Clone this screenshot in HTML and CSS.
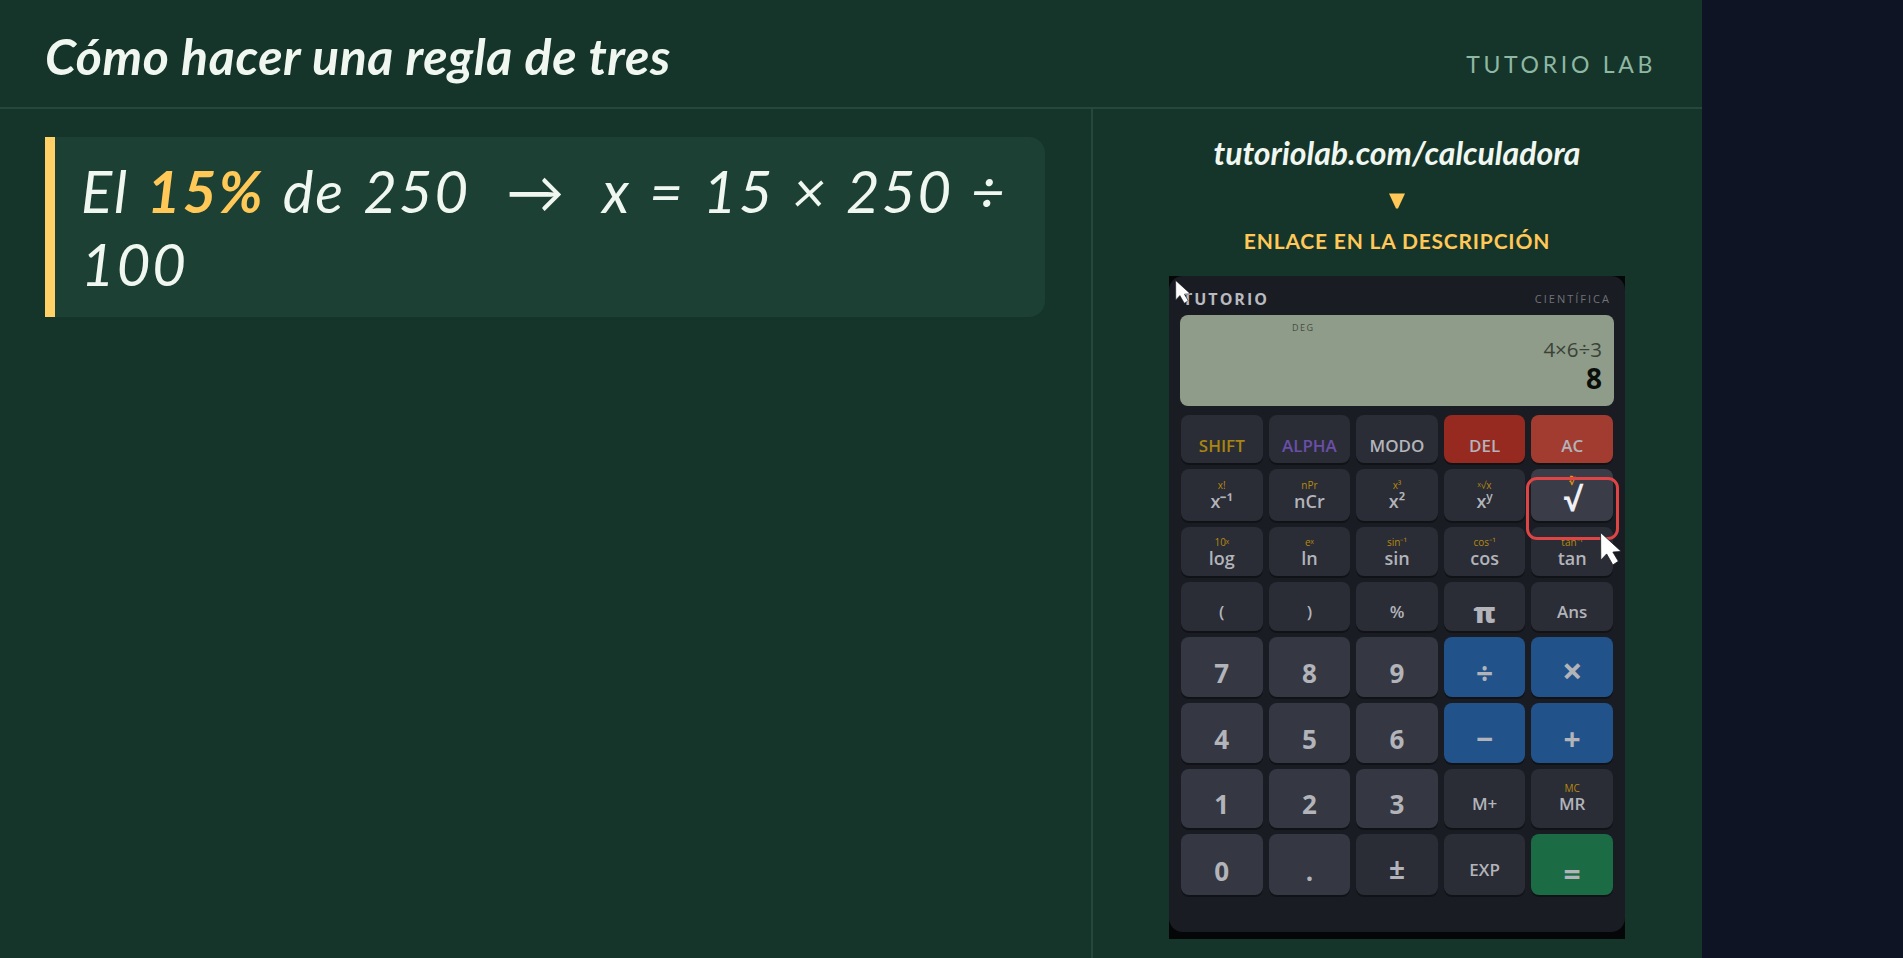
FILE: index.html
```html
<!DOCTYPE html>
<html lang="es">
<head>
    <meta charset="UTF-8">
    <title>Cómo hacer una regla de tres</title>
    <link rel="stylesheet" href="styles.css">
</head>
<body>
    <div class="board">
        <header class="top">
            <h1 class="title">Cómo hacer una regla de tres</h1>
            <span class="brand">TUTORIO LAB</span>
        </header>
        <main class="content">
            <section class="left">
                <p class="rule">El <strong>15%</strong> de 250 &nbsp;→&nbsp; x = 15 × 250 ÷<br>100</p>
            </section>
            <aside class="right">
                <div class="url">tutoriolab.com/calculadora</div>
                <svg class="arrow" width="16" height="16" viewBox="0 0 16 16"><path d="M0 0.5 L16 0.5 L9 15.5 L7 15.5 Z" fill="#ffc857"/></svg>
                <div class="link-note">ENLACE EN LA DESCRIPCIÓN</div>
                <div class="calc-frame">
                    <div class="calc">
                        <div class="calc-head">
                            <span class="calc-brand">TUTORIO</span>
                            <span class="calc-model">CIENTÍFICA</span>
                        </div>
                        <div class="screen">
                            <div class="indicators">DEG</div>
                            <div class="expr">4×6÷3</div>
                            <div class="result">8</div>
                        </div>
                        <div class="keys">
                            <div class="key k-shift">SHIFT</div>
                            <div class="key k-alpha">ALPHA</div>
                            <div class="key k-mode">MODO</div>
                            <div class="key k-del">DEL</div>
                            <div class="key k-ac">AC</div>

                            <div class="key k-sci"><small>x!</small>x⁻¹</div>
                            <div class="key k-sci"><small>nPr</small>nCr</div>
                            <div class="key k-sci"><small>x³</small>x²</div>
                            <div class="key k-sci"><small>ˣ√x</small><span>x<sup class="sup">y</sup></span></div>
                            <div class="key k-sci k-active"><small>∛</small>√</div>

                            <div class="key k-sci k-trig"><small>10ˣ</small>log</div>
                            <div class="key k-sci k-trig"><small>eˣ</small>ln</div>
                            <div class="key k-sci k-trig"><small>sin⁻¹</small>sin</div>
                            <div class="key k-sci k-trig"><small>cos⁻¹</small>cos</div>
                            <div class="key k-sci k-trig"><small>tan⁻¹</small>tan</div>

                            <div class="key k-misc">(</div>
                            <div class="key k-misc">)</div>
                            <div class="key k-misc">%</div>
                            <div class="key k-misc k-pi">π</div>
                            <div class="key k-misc">Ans</div>

                            <div class="key k-num">7</div>
                            <div class="key k-num">8</div>
                            <div class="key k-num">9</div>
                            <div class="key k-op">÷</div>
                            <div class="key k-op k-times">×</div>

                            <div class="key k-num">4</div>
                            <div class="key k-num">5</div>
                            <div class="key k-num">6</div>
                            <div class="key k-op">−</div>
                            <div class="key k-op">+</div>

                            <div class="key k-num">1</div>
                            <div class="key k-num">2</div>
                            <div class="key k-num">3</div>
                            <div class="key k-mem">M+</div>
                            <div class="key k-mem"><small>MC</small>MR</div>

                            <div class="key k-num">0</div>
                            <div class="key k-num">.</div>
                            <div class="key k-fn k-big">±</div>
                            <div class="key k-fn k-exp">EXP</div>
                            <div class="key k-eq">=</div>
                        </div>
                    </div>
                    <div class="highlight"></div>
                    <svg class="cursor cursor-a" width="16" height="24" viewBox="0 0 20 31"><path d="M0.5 0.5 L0.7 25.7 L6 20 L11.7 30 L16.7 26.7 L11.7 18.3 L19.3 17.7 Z" fill="#fff" stroke="#15171c" stroke-width="0.7"/></svg>
                    <svg class="cursor cursor-b" width="22" height="34" viewBox="0 0 20 31"><path d="M0.5 0.5 L0.7 25.7 L6 20 L11.7 30 L16.7 26.7 L11.7 18.3 L19.3 17.7 Z" fill="#fff" stroke="#15171c" stroke-width="0.7"/></svg>
                </div>
            </aside>
        </main>
    </div>
    <div class="strip"></div>
</body>
</html>
```

FILE: styles.css
```css
* {
    box-sizing: border-box;
}

body {
    display: flex;
    height: 958px;
    margin: 0;
    overflow: hidden;
    background: #0e1424;
}

.board {
    display: flex;
    flex-direction: column;
    width: 1702px;
    background: #15352a;
    color: #f0f7f0;
    font-family: "Lato", sans-serif;
    font-style: italic;
}

.strip {
    flex: 1;
}

.top {
    display: flex;
    justify-content: space-between;
    align-items: center;
    height: 109px;
    padding: 0 46px 0 45px;
    border-bottom: 2px solid #24493c;
}

.title {
    margin: 4px 0 0;
    font-size: 50px;
    font-weight: 700;
    letter-spacing: 0.6px;
}

.brand {
    margin-top: 21px;
    font-size: 23px;
    font-style: normal;
    letter-spacing: 3.7px;
    color: #8fb8a4;
}

.content {
    display: flex;
    flex: 1;
}

.left {
    width: 1093px;
    padding: 28px 46px 0 45px;
    border-right: 2px solid #24493c;
}

.rule {
    margin: 0;
    padding: 17px 24px 17px 26px;
    font-size: 58px;
    line-height: 73px;
    letter-spacing: 2px;
    word-spacing: 2.5px;
    background: #1c4034;
    border-left: 10px solid #ffd166;
    border-radius: 0 16px 16px 0;
}

.rule strong {
    color: #ffc857;
}

.right {
    display: flex;
    flex: 1;
    flex-direction: column;
    align-items: center;
    padding: 22px 1px 0 0;
}

.url {
    height: 44px;
    font-size: 32px;
    line-height: 44px;
    font-weight: 700;
}

.arrow {
    margin-top: 18px;
}

.link-note {
    margin-top: 15px;
    height: 34px;
    font-size: 21px;
    font-style: normal;
    font-weight: 700;
    line-height: 34px;
    color: #ffc857;
    letter-spacing: 0.8px;
}

.calc-frame {
    position: relative;
    width: 456px;
    height: 663px;
    margin-top: 18px;
    background: #050608;
    font-style: normal;
}

.calc {
    height: 656px;
    padding: 0 11px;
    background: #1a1c23;
    border-radius: 14px;
    font-family: "Open Sans", sans-serif;
}

.calc-head {
    display: flex;
    justify-content: space-between;
    align-items: center;
    height: 39px;
    padding: 6px 3px 0 3px;
}

.calc-brand {
    font-size: 16px;
    font-weight: 700;
    letter-spacing: 2px;
    color: #b8bac0;
}

.calc-model {
    font-size: 11px;
    letter-spacing: 2px;
    color: #6f7278;
}

.screen {
    height: 91px;
    padding: 7px 12px 0 112px;
    background: #8f9c8a;
    border-radius: 8px;
    text-align: right;
}

.indicators {
    font-size: 9px;
    line-height: 12px;
    letter-spacing: 1.5px;
    text-align: left;
    color: #444c42;
}

.expr {
    margin-top: 3px;
    font-size: 20.5px;
    line-height: 24px;
    color: #3a4238;
}

.result {
    font-size: 28px;
    line-height: 35px;
    font-weight: 700;
    color: #0a0f0a;
}

.keys {
    display: grid;
    grid-template-columns: repeat(5, 1fr);
    grid-template-rows: 48px 52px 49px 49px 60px 60px 59px 61px;
    gap: 6px;
    margin-top: 9px;
    padding: 0 1px;
}

.key {
    display: flex;
    flex-direction: column;
    justify-content: flex-end;
    align-items: center;
    padding-bottom: 7px;
    font-size: 17px;
    line-height: 20px;
    font-weight: 600;
    color: #b2b4ba;
    background: #2a2c36;
    border-radius: 8px;
    box-shadow: 0 2px 0 rgba(0, 0, 0, 0.35);
}

.key small {
    font-size: 10px;
    line-height: 12px;
    font-weight: 400;
    color: #b58a10;
}

.sup {
    font-size: 12px;
    line-height: 0;
}

.k-shift {
    color: #a8860f;
}

.k-alpha {
    color: #6a4fa8;
}

.k-del {
    background: #962a20;
}

.k-ac {
    background: #a33c30;
}

.k-sci {
    font-size: 18px;
    padding-bottom: 10px;
}

.k-trig {
    padding-bottom: 8px;
}

.k-active {
    font-size: 32px;
    font-weight: 700;
    line-height: 26px;
    color: #eef0f6;
    background: #3a3d48;
    padding-bottom: 9px;
}

.k-active small {
    margin-bottom: -1px;
    font-weight: 700;
    color: #e8950f;
}

.k-misc {
    padding-bottom: 9px;
}

.k-pi {
    font-size: 28px;
    font-weight: 800;
}

.k-mem {
    padding-bottom: 14px;
}

.k-num,
.k-op,
.k-eq,
.k-big {
    font-size: 26px;
    font-weight: 700;
    line-height: 30px;
    padding-bottom: 9px;
}

.k-op {
    font-size: 30px;
}

.k-times {
    font-size: 36px;
    padding-bottom: 11px;
}

.k-big {
    font-size: 28px;
    padding-bottom: 12px;
}

.k-num {
    background: #353842;
}

.k-op {
    background: #22528a;
}

.k-eq {
    background: #1b6b45;
    font-size: 30px;
    padding-bottom: 6px;
}

.k-exp {
    padding-bottom: 15px;
}

.highlight {
    position: absolute;
    left: 357px;
    top: 201px;
    width: 93px;
    height: 63px;
    border: 3px solid #e04545;
    border-radius: 11px;
}

.cursor {
    position: absolute;
}

.cursor-a {
    left: 6px;
    top: 4px;
}

.cursor-b {
    left: 431px;
    top: 256px;
}
```
